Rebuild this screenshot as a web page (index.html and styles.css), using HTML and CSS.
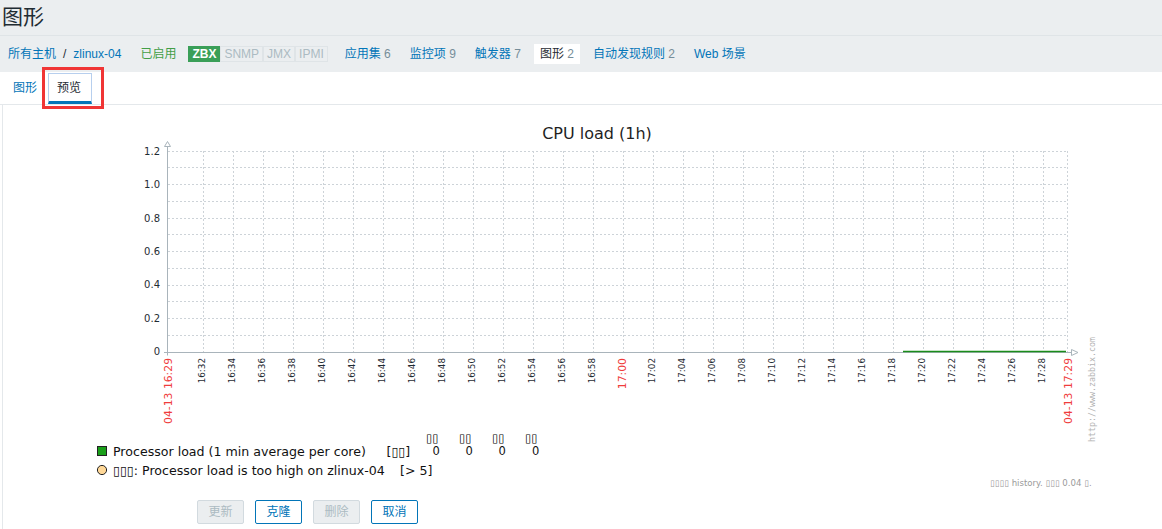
FILE: index.html
```html
<!DOCTYPE html>
<html lang="zh-CN">
<head>
<meta charset="utf-8">
<title>图形</title>
<link rel="stylesheet" href="styles.css">
</head>
<body>
<header class="page-header"><h1 class="page-title">图形</h1></header>
<nav class="host-nav">
  <div class="nav-item breadcrumb"><a class="link">所有主机</a><span class="sep">/</span><a class="link">zlinux-04</a></div>
  <div class="nav-item status-enabled">已启用</div>
  <div class="badges"><span class="badge badge-on">ZBX</span><span class="badge">SNMP</span><span class="badge">JMX</span><span class="badge">IPMI</span></div>
  <div class="nav-item"><a class="link">应用集</a> <span class="count">6</span></div>
  <div class="nav-item"><a class="link">监控项</a> <span class="count">9</span></div>
  <div class="nav-item"><a class="link">触发器</a> <span class="count">7</span></div>
  <div class="nav-item selected"><span>图形</span> <span class="count">2</span></div>
  <div class="nav-item"><a class="link">自动发现规则</a> <span class="count">2</span></div>
  <div class="nav-item"><a class="link">Web 场景</a></div>
</nav>
<main class="content">
  <div class="tabs">
    <a class="tab">图形</a>
    <span class="tab tab-active">预览</span>
  </div>
  <div class="annotation"></div>
  <div class="tab-panel">
    <svg class="graph" width="1020" height="380" viewBox="88 115 1020 380" xmlns="http://www.w3.org/2000/svg">
      <text class="g-title" x="597" y="138.5" text-anchor="middle">CPU load (1h)</text>
      <path class="grid" d="M203.5 151V352M233.5 151V352M263.5 151V352M293.5 151V352M323.5 151V352M353.5 151V352M383.5 151V352M413.5 151V352M443.5 151V352M473.5 151V352M503.5 151V352M533.5 151V352M563.5 151V352M593.5 151V352M623.5 151V352M653.5 151V352M683.5 151V352M713.5 151V352M743.5 151V352M773.5 151V352M803.5 151V352M833.5 151V352M863.5 151V352M893.5 151V352M923.5 151V352M953.5 151V352M983.5 151V352M1013.5 151V352M1043.5 151V352M1067.5 151V352"/>
      <path class="grid" d="M168 151.5H1068M168 167.5H1068M168 184.5H1068M168 201.5H1068M168 218.5H1068M168 234.5H1068M168 251.5H1068M168 268.5H1068M168 285.5H1068M168 301.5H1068M168 318.5H1068M168 335.5H1068"/>
      <path class="axis" d="M167.5 146V355.5M164 352.5H1071.5"/>
      <path class="arrow" d="M167.5 141.5L170.5 146.5H164.5Z"/>
      <path class="arrow" d="M1078 352.5L1071.5 349.5V355.5Z"/>
      <path class="data" d="M903 351.5H1066"/>
      <g class="y-labels" text-anchor="end">
        <text x="160" y="154.5">1.2</text>
        <text x="160" y="187.5">1.0</text>
        <text x="160" y="221.5">0.8</text>
        <text x="160" y="254.5">0.6</text>
        <text x="160" y="288">0.4</text>
        <text x="160" y="321.5">0.2</text>
        <text x="160" y="355">0</text>
      </g>
      <g class="x-labels" text-anchor="end">
        <text transform="translate(205 358) rotate(-90)">16:32</text>
        <text transform="translate(235 358) rotate(-90)">16:34</text>
        <text transform="translate(265 358) rotate(-90)">16:36</text>
        <text transform="translate(295 358) rotate(-90)">16:38</text>
        <text transform="translate(325 358) rotate(-90)">16:40</text>
        <text transform="translate(355 358) rotate(-90)">16:42</text>
        <text transform="translate(385 358) rotate(-90)">16:44</text>
        <text transform="translate(415 358) rotate(-90)">16:46</text>
        <text transform="translate(445 358) rotate(-90)">16:48</text>
        <text transform="translate(475 358) rotate(-90)">16:50</text>
        <text transform="translate(505 358) rotate(-90)">16:52</text>
        <text transform="translate(535 358) rotate(-90)">16:54</text>
        <text transform="translate(565 358) rotate(-90)">16:56</text>
        <text transform="translate(595 358) rotate(-90)">16:58</text>
        <text transform="translate(655 358) rotate(-90)">17:02</text>
        <text transform="translate(685 358) rotate(-90)">17:04</text>
        <text transform="translate(715 358) rotate(-90)">17:06</text>
        <text transform="translate(745 358) rotate(-90)">17:08</text>
        <text transform="translate(775 358) rotate(-90)">17:10</text>
        <text transform="translate(805 358) rotate(-90)">17:12</text>
        <text transform="translate(835 358) rotate(-90)">17:14</text>
        <text transform="translate(865 358) rotate(-90)">17:16</text>
        <text transform="translate(895 358) rotate(-90)">17:18</text>
        <text transform="translate(925 358) rotate(-90)">17:20</text>
        <text transform="translate(955 358) rotate(-90)">17:22</text>
        <text transform="translate(985 358) rotate(-90)">17:24</text>
        <text transform="translate(1015 358) rotate(-90)">17:26</text>
        <text transform="translate(1045 358) rotate(-90)">17:28</text>
      </g>
      <g class="x-labels-red" text-anchor="end">
        <text transform="translate(171.5 358) rotate(-90)">04-13 16:29</text>
        <text transform="translate(625.5 358) rotate(-90)">17:00</text>
        <text transform="translate(1071.5 358) rotate(-90)">04-13 17:29</text>
      </g>
      <text class="zabbix-url" transform="translate(1095 442) rotate(-90)">http://www.zabbix.com</text>
      <g class="legend">
        <g class="legend-head">
          <text x="426" y="442">▯▯</text>
          <text x="459" y="442">▯▯</text>
          <text x="492" y="442">▯▯</text>
          <text x="525" y="442">▯▯</text>
        </g>
        <rect class="swatch" x="97.5" y="446.5" width="9" height="9"/>
        <text x="113" y="455.5">Processor load (1 min average per core)</text>
        <text x="386.5" y="455.5">[▯▯]</text>
        <g class="legend-val">
          <text x="432.5" y="455">0</text>
          <text x="465.5" y="455">0</text>
          <text x="498.5" y="455">0</text>
          <text x="532" y="455">0</text>
        </g>
        <circle class="trigger-dot" cx="102" cy="470" r="4.6"/>
        <text x="113" y="474.5">▯▯▯: Processor load is too high on zlinux-04</text>
        <text x="400" y="474.5">[&gt; 5]</text>
      </g>
      <text class="g-note" x="990" y="486">▯▯▯▯ history. ▯▯▯ 0.04 ▯.</text>
    </svg>
    <div class="buttons">
      <button class="btn" disabled>更新</button>
      <button class="btn">克隆</button>
      <button class="btn" disabled>删除</button>
      <button class="btn">取消</button>
    </div>
  </div>
</main>
</body>
</html>
```

FILE: styles.css
```css
html, body {
  margin: 0;
  padding: 0;
}
body {
  background: #ebeef0;
  color: #1f2c33;
  font-family: "Liberation Sans", "Noto Sans CJK SC", sans-serif;
  font-size: 12px;
  width: 1162px;
  height: 529px;
  overflow: hidden;
  position: relative;
}
.page-header {
  height: 35px;
  border-bottom: 1px solid #dfe4e7;
}
.page-title {
  margin: 0;
  padding-left: 2px;
  font-size: 21px;
  font-weight: normal;
  line-height: 34px;
  color: #1f2c33;
}
.host-nav {
  height: 36px;
  display: flex;
  align-items: center;
  padding-left: 2px;
  gap: 7px;
}
.nav-item {
  padding: 3px 6px;
  line-height: 14px;
  white-space: nowrap;
}
.link {
  color: #0275b8;
  text-decoration: none;
}
.count {
  color: #768d99;
}
.sep {
  margin: 0 7px;
  color: #1f2c33;
}
.status-enabled {
  color: #429e47;
}
.nav-item.selected {
  background: #ffffff;
  color: #1f2c33;
}
.badges {
  display: flex;
  margin-left: -1px;
  margin-right: 4px;
}
.badge {
  display: inline-block;
  height: 14px;
  line-height: 14px;
  padding: 0 3px;
  border: 1px solid #dfe4e7;
  color: #acbbc2;
}
.badge-on {
  background: #3a9f58;
  border-color: #3a9f58;
  color: #ffffff;
  font-weight: bold;
}
.content {
  background: #ffffff;
  height: 457px;
}
.tabs {
  display: flex;
  padding: 1px 0 0 2px;
  height: 31px;
  border-bottom: 1px solid #e4e8eb;
}
.tab {
  display: block;
  height: 25px;
  line-height: 25px;
  padding: 2px 10px 0 10px;
  border: 1px solid transparent;
  border-bottom: 3px solid transparent;
  color: #0275b8;
  text-decoration: none;
}
.tab-active {
  border-color: #b7cfee;
  border-bottom-color: #0275b8;
  color: #1f2c33;
  padding: 2px 10px 0 8px;
}
.annotation {
  position: absolute;
  left: 42px;
  top: 67px;
  width: 56px;
  height: 36px;
  border: 3px solid #f03535;
}
.tab-panel {
  margin-left: 2px;
  border-left: 1px solid #e4e8eb;
  height: 424px;
}
.graph {
  display: block;
  margin-left: 85px;
  padding-top: 10px;
  font-family: "DejaVu Sans", sans-serif;
}
.g-title {
  font-size: 16px;
  fill: #1f1f1f;
}
.grid {
  fill: none;
  stroke: #cdd3d8;
  stroke-width: 1;
  stroke-dasharray: 2 2;
}
.axis {
  fill: none;
  stroke: #a9b4bb;
  stroke-width: 1;
}
.arrow {
  fill: #ffffff;
  stroke: #a9b4bb;
  stroke-width: 1;
}
.data {
  fill: none;
  stroke: #1a8c1a;
  stroke-width: 1.5;
}
.y-labels {
  font-size: 10px;
  fill: #1f2c33;
}
.x-labels {
  font-size: 8.8px;
  fill: #1f2c33;
}
.x-labels-red {
  font-size: 10.8px;
  fill: #ef3c3c;
}
.zabbix-url {
  font-family: "DejaVu Sans Mono", monospace;
  font-size: 8.3px;
  fill: #b3b3b3;
}
.legend {
  font-size: 12.6px;
  fill: #111111;
}
.legend-head {
  font-size: 11.5px;
  fill: #000000;
}
.legend-val {
  font-size: 11.5px;
}
.swatch {
  fill: #1a9f1a;
  stroke: #222222;
  stroke-width: 1;
}
.trigger-dot {
  fill: #ffd898;
  stroke: #222222;
  stroke-width: 1;
}
.g-note {
  font-size: 8.6px;
  fill: #9a9a9a;
}
.buttons {
  display: flex;
  gap: 11px;
  margin-left: 194px;
  margin-top: 5px;
}
.btn {
  width: 47px;
  height: 24px;
  padding: 0;
  border: 1px solid #0275b8;
  border-radius: 2px;
  background: #ffffff;
  color: #0275b8;
  font-family: "Liberation Sans", "Noto Sans CJK SC", sans-serif;
  font-size: 12px;
  line-height: 22px;
}
.btn:disabled {
  background: #ebeef0;
  border-color: #d2dadf;
  color: #acbbc2;
}
```
